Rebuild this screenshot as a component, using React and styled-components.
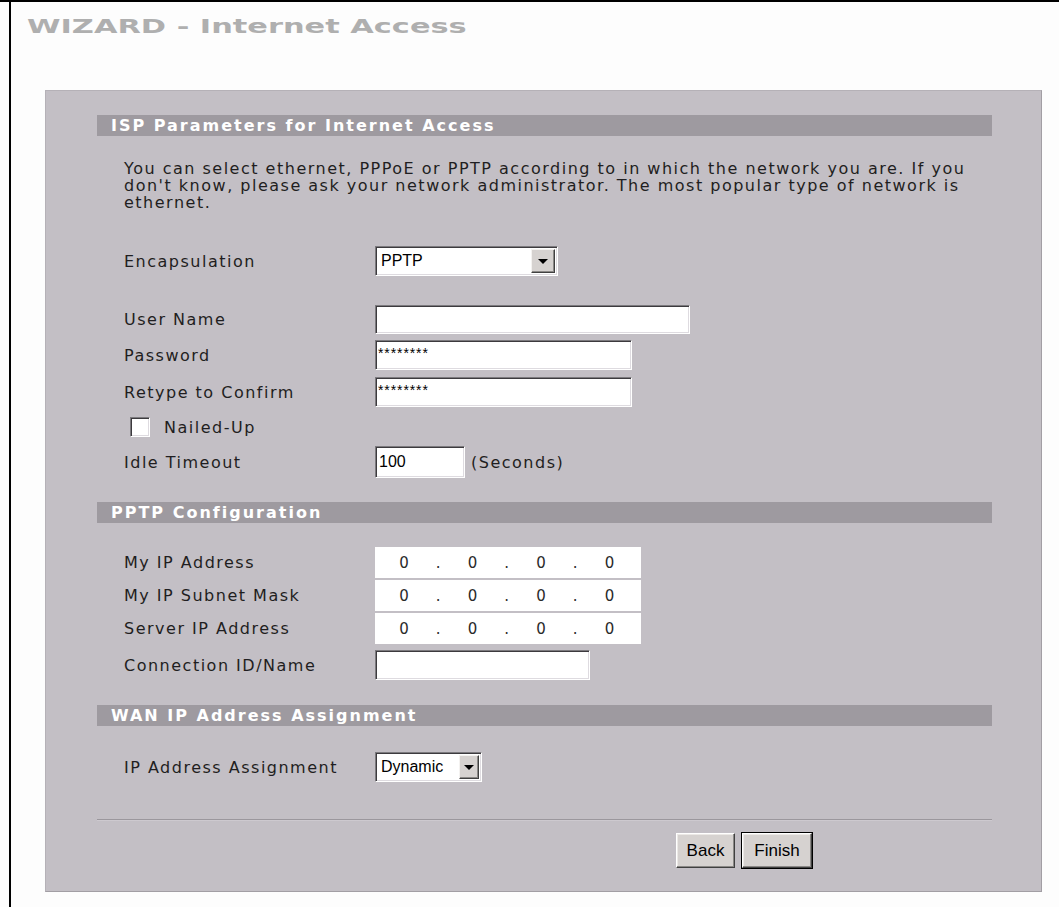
import React from "react";
import styled, { createGlobalStyle } from "styled-components";

const Global = createGlobalStyle`
  html, body { margin: 0; padding: 0; background: #fdfdfd; }
  body { font-family: "DejaVu Sans", Verdana, sans-serif; color: #1f1e21; }
`;

const Frame = styled.div`
  border-top: 2px solid #000;
  min-height: 905px;
`;

const Page = styled.div`
  margin-left: 9px;
  border-left: 2px solid #000;
  min-height: 905px;
  box-sizing: border-box;
  padding-top: 12px;
`;

const TitleRow = styled.div`
  margin-left: 16px;
  height: 24px;
`;

const Title = styled.h1`
  display: inline-block;
  margin: 0;
  font: bold 19px/24px "DejaVu Sans", Verdana, sans-serif;
  color: #afafaf;
  white-space: nowrap;
  transform: scaleX(1.6);
  transform-origin: left center;
`;

const Panel = styled.section`
  margin: 52px 0 0 34px;
  width: 997px;
  box-sizing: border-box;
  background: #c3bfc5;
  border: 1px solid #b5b1b7;
  border-right-color: #a29ea4;
  border-bottom-color: #a29ea4;
  padding: 24px 49px 23px 51px;
`;

const SectionBar = styled.h2`
  margin: ${(p) => p.$top || 0}px 0 0;
  height: 21px;
  background: #9e9aa0;
  color: #fff;
  font: bold 16px/22px "DejaVu Sans", Verdana, sans-serif;
  letter-spacing: 2px;
  padding-left: 14px;
`;

const Para = styled.p`
  margin: 24px 0 0;
  padding-left: 27px;
  font-size: 16px;
  line-height: 17px;
  letter-spacing: 1.5px;
`;

const Row = styled.div`
  display: flex;
  align-items: center;
  padding-left: 27px;
  margin-top: ${(p) => p.$top || 0}px;
  height: ${(p) => p.$h || 29}px;
`;

const Label = styled.span`
  flex: none;
  width: 251px;
  font-size: 16px;
  letter-spacing: 1.5px;
  white-space: nowrap;
`;

const sunken = `
  border: 1px solid;
  border-color: #7c7a7e #ffffff #ffffff #7c7a7e;
  box-shadow: inset 1px 1px 0 #3c3a3e, inset -1px -1px 0 #dedbe0;
`;

const TextBox = styled.input`
  box-sizing: border-box;
  width: ${(p) => p.$w}px;
  height: ${(p) => p.$h || 29}px;
  margin: 0;
  padding: 0 3px;
  ${sunken}
  background: #fff;
  font: 16px "Liberation Sans", Arial, sans-serif;
  color: #000;
  outline: none;
`;

const Stars = styled(TextBox)`
  font-size: 14px;
  letter-spacing: 0.9px;
  padding-left: 2px;
  padding-bottom: 4px;
`;

const Select = styled.div`
  box-sizing: border-box;
  display: flex;
  align-items: stretch;
  width: ${(p) => p.$w}px;
  height: ${(p) => p.$h || 28}px;
  ${sunken}
  padding: 2px;
  background: #fff;
`;

const SelectText = styled.span`
  flex: 1;
  display: flex;
  align-items: center;
  padding-left: 3px;
  font: 16px "Liberation Sans", Arial, sans-serif;
  color: #000;
`;

const ArrowButton = styled.span`
  flex: none;
  width: ${(p) => p.$w || 20}px;
  box-sizing: border-box;
  display: flex;
  align-items: center;
  justify-content: center;
  background: #d6d2d0;
  border: 1px solid;
  border-color: #f4f2f0 #404040 #404040 #f4f2f0;
  box-shadow: inset -1px -1px 0 #8a8886;
`;

const CheckBox = styled.input`
  appearance: none;
  -webkit-appearance: none;
  box-sizing: border-box;
  width: 20px;
  height: 20px;
  margin: 0 0 0 6px;
  ${sunken}
  background: #fff;
`;

const CheckLabel = styled.span`
  margin-left: 14px;
  font-size: 16px;
  letter-spacing: 1.5px;
`;

const Unit = styled.span`
  margin-left: 6px;
  font-size: 16px;
  letter-spacing: 1.5px;
`;

const IpBox = styled.div`
  box-sizing: border-box;
  width: 266px;
  height: 100%;
  display: flex;
  align-items: center;
  padding-left: 11px;
  background: #fff;
  font-size: 15px;
  color: #2a2a2a;
`;

const Octet = styled.span`
  width: 36px;
  text-align: center;
`;

const Dot = styled.span`
  width: 32.5px;
  text-align: center;
`;

const Separator = styled.hr`
  margin: 37px 0 0;
  height: 0;
  border: none;
  border-top: 1px solid #9b979d;
  border-bottom: 1px solid #cdc9cf;
`;

const ButtonRow = styled.div`
  display: flex;
  gap: 7px;
  margin: 12px 0 0 579px;
`;

const Button = styled.button`
  box-sizing: border-box;
  width: ${(p) => p.$w}px;
  height: 35px;
  margin: 0;
  padding: 0;
  background: #d6d2d0;
  font: 17px "Liberation Sans", Arial, sans-serif;
  color: #000;
  border: 1px solid;
  border-color: #ffffff #404040 #404040 #ffffff;
  box-shadow: inset -1px -1px 0 #8a8886, inset 1px 1px 0 #ece9e6;
  outline: ${(p) => (p.$default ? "1px solid #000" : "none")};
  outline-offset: 0;
`;

const Arrow = () => (
  <svg width="10" height="5" viewBox="0 0 10 5" aria-hidden="true">
    <path d="M0 0 H10 L5 5 Z" fill="#000" />
  </svg>
);

const Ip = () => (
  <IpBox>
    <Octet>0</Octet>
    <Dot>.</Dot>
    <Octet>0</Octet>
    <Dot>.</Dot>
    <Octet>0</Octet>
    <Dot>.</Dot>
    <Octet>0</Octet>
  </IpBox>
);

export default function App() {
  return (
    <>
      <Global />
      <Frame>
        <Page>
          <TitleRow>
            <Title>WIZARD - Internet Access</Title>
          </TitleRow>
          <Panel>
            <SectionBar>ISP Parameters for Internet Access</SectionBar>
            <Para>
              You can select ethernet, PPPoE or PPTP according to in which the
              network you are. If you don't know, please ask your network
              administrator. The most popular type of network is ethernet.
            </Para>
            <Row $top={35} $h={30}>
              <Label>Encapsulation</Label>
              <Select $w={183} $h={30}>
                <SelectText>PPTP</SelectText>
                <ArrowButton $w={24}>
                  <Arrow />
                </ArrowButton>
              </Select>
            </Row>
            <Row $top={29}>
              <Label>User Name</Label>
              <TextBox $w={315} defaultValue="" />
            </Row>
            <Row $top={6} $h={30}>
              <Label>Password</Label>
              <Stars $w={257} $h={30} value="********" readOnly />
            </Row>
            <Row $top={7} $h={30}>
              <Label>Retype to Confirm</Label>
              <Stars $w={257} $h={30} value="********" readOnly />
            </Row>
            <Row $top={10} $h={20}>
              <CheckBox type="checkbox" />
              <CheckLabel>Nailed-Up</CheckLabel>
            </Row>
            <Row $top={9} $h={32}>
              <Label>Idle Timeout</Label>
              <TextBox $w={90} $h={32} defaultValue="100" />
              <Unit>(Seconds)</Unit>
            </Row>

            <SectionBar $top={24}>PPTP Configuration</SectionBar>
            <Row $top={24} $h={31}>
              <Label>My IP Address</Label>
              <Ip />
            </Row>
            <Row $top={2} $h={31}>
              <Label>My IP Subnet Mask</Label>
              <Ip />
            </Row>
            <Row $top={2} $h={31}>
              <Label>Server IP Address</Label>
              <Ip />
            </Row>
            <Row $top={6} $h={30}>
              <Label>Connection ID/Name</Label>
              <TextBox $w={215} $h={30} defaultValue="" />
            </Row>

            <SectionBar $top={25}>WAN IP Address Assignment</SectionBar>
            <Row $top={26} $h={30}>
              <Label>IP Address Assignment</Label>
              <Select $w={107} $h={30}>
                <SelectText>Dynamic</SelectText>
                <ArrowButton $w={20}>
                  <Arrow />
                </ArrowButton>
              </Select>
            </Row>

            <Separator />
            <ButtonRow>
              <Button type="button" $w={59}>Back</Button>
              <Button type="button" $w={70} $default>Finish</Button>
            </ButtonRow>
          </Panel>
        </Page>
      </Frame>
    </>
  );
}
